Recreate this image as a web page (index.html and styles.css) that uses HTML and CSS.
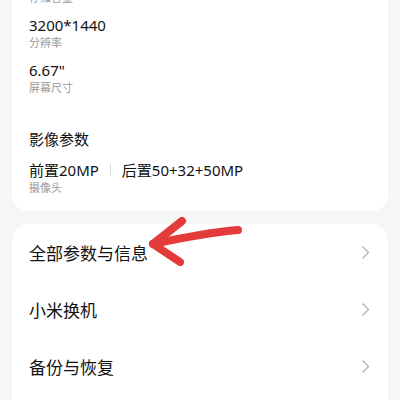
FILE: index.html
```html
<!DOCTYPE html>
<html>
<head>
<meta charset="utf-8">
<link rel="stylesheet" href="styles.css">
</head>
<body>
<div class="page">
  <div class="card specs">
    <div class="item">
      <div class="value">12GB+512GB</div>
      <div class="label">存储容量</div>
    </div>
    <div class="item">
      <div class="value">3200*1440</div>
      <div class="label">分辨率</div>
    </div>
    <div class="item">
      <div class="value">6.67"</div>
      <div class="label">屏幕尺寸</div>
    </div>
    <div class="section-title">影像参数</div>
    <div class="item">
      <div class="value cams"><span>前置20MP</span><span class="sep"></span><span>后置50+32+50MP</span></div>
      <div class="label">摄像头</div>
    </div>
  </div>
  <div class="card menu">
    <div class="row"><span>全部参数与信息</span><svg class="chev" width="9" height="15" viewBox="0 0 9 15"><path d="M1.5 1.5 L7.5 7.5 L1.5 13.5" fill="none" stroke="#b3b3b3" stroke-width="1.3"/></svg></div>
    <div class="row"><span>小米换机</span><svg class="chev" width="9" height="15" viewBox="0 0 9 15"><path d="M1.5 1.5 L7.5 7.5 L1.5 13.5" fill="none" stroke="#b3b3b3" stroke-width="1.3"/></svg></div>
    <div class="row"><span>备份与恢复</span><svg class="chev" width="9" height="15" viewBox="0 0 9 15"><path d="M1.5 1.5 L7.5 7.5 L1.5 13.5" fill="none" stroke="#b3b3b3" stroke-width="1.3"/></svg></div>
  </div>
  <svg class="arrow" width="400" height="400" viewBox="0 0 400 400">
    <path d="M238 230 C215 232 190 236 153 244" fill="none" stroke="#e33a3a" stroke-width="8" stroke-linecap="round"/>
    <path d="M182 221 L153 244 L180 262" fill="none" stroke="#e33a3a" stroke-width="8" stroke-linecap="round" stroke-linejoin="round"/>
  </svg>
</div>
</body>
</html>
```
FILE: styles.css
```css
html, body {
  margin: 0;
  padding: 0;
  background: #f6f6f6;
  overflow: hidden;
}
.page {
  position: relative;
  width: 400px;
  height: 400px;
  overflow: hidden;
  font-family: "Noto Sans", "Noto Sans CJK SC", sans-serif;
  color: #111;
}
.card {
  background: #fff;
  margin: 0 12px;
  border-radius: 16px;
}
.specs {
  margin-top: -40px;
  padding: 10px 17px 16px;
}
.item {
  margin-bottom: 10px;
}
.value {
  font-size: 15px;
  line-height: 20px;
}
.label {
  font-size: 11px;
  line-height: 15px;
  color: #9a9a9a;
}
.section-title {
  font-size: 15px;
  line-height: 20px;
  margin-top: 34px;
  margin-bottom: 11px;
}
.cams {
  display: flex;
  align-items: center;
}
.sep {
  width: 1px;
  height: 12px;
  background: #d8d8d8;
  margin: 0 11px;
}
.specs .item:last-child {
  margin-bottom: 0;
}
.menu {
  margin-top: 13px;
  padding: 0 17px 40px;
}
.row {
  height: 57px;
  display: flex;
  align-items: center;
  justify-content: space-between;
  font-size: 17px;
}
.chev {
  margin-right: 1px;
}
.arrow {
  position: absolute;
  left: 0;
  top: 0;
}
```
